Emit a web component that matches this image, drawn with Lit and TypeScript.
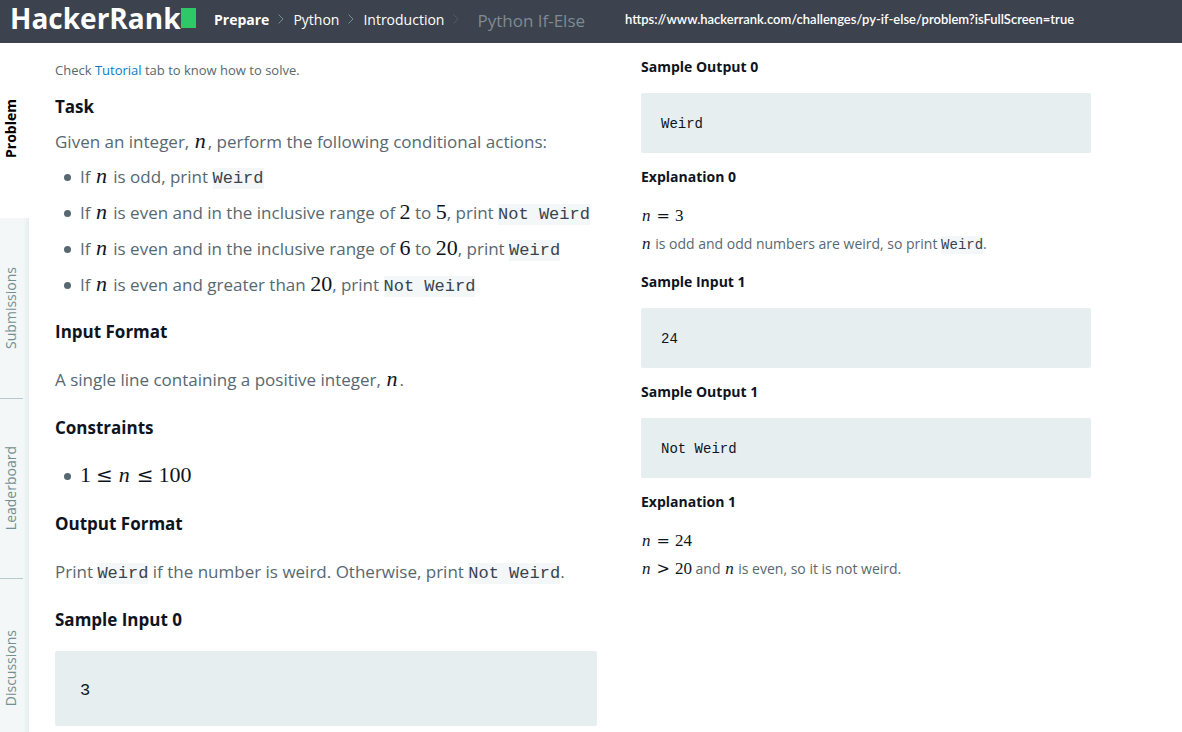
import { LitElement, html, css, svg } from "lit";
import { customElement } from "lit/decorators.js";

const chevron = (cls = "") => html`<svg class="chevron ${cls}" viewBox="0 0 8 12" width="8" height="12" aria-hidden="true">
  ${svg`<path d="M1.5 1.5 L6 6 L1.5 10.5" fill="none" stroke="currentColor" stroke-width="1"></path>`}
</svg>`;

const n = html`<var>n</var>`;
const num = (v: number) => html`<span class="num">${v}</span>`;
const rel = (s: string) => html`<span class="rel">${s}</span>`;

@customElement("app-root")
export class AppRoot extends LitElement {
  static styles = css`
    :host {
      display: flex;
      flex-direction: column;
      height: 100vh;
      overflow: hidden;
      background: #fff;
      color: #576871;
      font-family: "Open Sans", sans-serif;
    }
    * { box-sizing: border-box; }
    a { color: inherit; text-decoration: none; }
    header {
      display: flex;
      align-items: center;
      flex: none;
      height: 43px;
      padding: 0 10px 5px;
      background: #3c424e;
      color: #fff;
      font-size: 14px;
      white-space: nowrap;
    }
    .logo {
      display: flex;
      align-items: center;
      width: 204px;
      padding-bottom: 3px;
      font-size: 28px;
      line-height: 36px;
      font-weight: 700;
    }
    .logo-mark { width: 15px; height: 20px; background: #2ec866; }
    .crumbs { display: flex; align-items: center; width: 411px; }
    .crumbs b { font-weight: 700; }
    .chevron { margin: 0 8px; color: #6f8f93; flex: none; }
    .chevron.faint { color: #505b66; margin-right: 17px; }
    .current { font-size: 17px; line-height: 24px; color: #7f8b92; padding-top: 3px; }
    .url { font-family: Lato, sans-serif; font-size: 13px; font-weight: 600; }
    .body { display: flex; flex: 1; min-height: 0; }
    nav.rail { display: flex; flex-direction: column; flex: none; width: 29px; }
    .tab {
      position: relative;
      display: flex;
      align-items: center;
      flex: none;
      height: 180px;
      padding-left: 1px;
      background: linear-gradient(to right, #f3f7f7 23px, #e7eeef);
      color: #738f93;
      font-size: 14px;
    }
    .tab span { writing-mode: vertical-rl; transform: rotate(180deg); line-height: 20px; }
    .tab.active { height: 175px; padding-bottom: 4px; background: #fff; color: #000; font-weight: 700; }
    .tab + .tab:not(.first)::before {
      content: "";
      position: absolute;
      inset: 0 6px auto 0;
      border-top: 1px solid #b7c9cc;
    }
    main {
      display: grid;
      grid-template-columns: minmax(0, 53fr) minmax(0, 44fr);
      gap: 44px;
      flex: 1;
      padding: 0 91px 0 26px;
      align-items: start;
    }
    h2, p, ul, pre { margin: 0; }
    h2 { color: #0e141e; font-weight: 700; }
    .left { padding-top: 9px; font-size: 17px; line-height: 48px; white-space: nowrap; }
    .left h2 { font-size: 17px; }
    .left .note { font-size: 13px; line-height: 37px; }
    .note a { color: #097bbf; }
    .tight { line-height: 35px; margin-bottom: 5px; }
    .tight ul { line-height: 36px; }
    ul { list-style: none; padding: 0; }
    li { display: flex; align-items: center; padding-left: 9px; }
    li::before {
      content: "";
      flex: none;
      width: 7px;
      height: 7px;
      margin-right: 9px;
      border-radius: 50%;
      background: #576871;
    }
    var, .num {
      font-family: "Liberation Serif", serif;
      font-size: 22px;
      line-height: 1;
      color: #0e141e;
    }
    var { padding: 0 2px 0 1px; }
    .rel { padding: 0 5px; font-family: "DejaVu Serif", serif; font-size: 20px; line-height: 1; color: #0e141e; }
    code, pre { font-family: "Liberation Mono", monospace; }
    code { font-size: 17px; color: #39424e; background: #f3f7f7; line-height: 20px; padding: 1px 0; }
    pre { background: #e7eeef; color: #0e141e; border-radius: 2px; }
    .left pre { margin-top: 7px; padding: 30px 25px 25px; font-size: 17px; line-height: 20px; }
    .right { font-size: 14px; line-height: 28px; }
    .right h2 { font-size: 14px; line-height: 48px; padding-bottom: 1px; }
    .right pre { margin-top: 1px; padding: 21px 20px 19px; font-size: 14px; line-height: 20px; }
    .right code { font-size: 14px; }
    .right var, .right .num { font-size: 17px; }
    .right var { padding: 0 1px; }
    .right .rel { font-size: 16px; }
  `;

  render() {
    return html`
      <header>
        <a class="logo" href="#">HackerRank<i class="logo-mark"></i></a>
        <nav class="crumbs" aria-label="Breadcrumb">
          <a href="#"><b>Prepare</b></a>${chevron()}<a href="#">Python</a>${chevron()}<a href="#">Introduction</a>${chevron("faint")}<span class="current">Python If-Else</span>
        </nav>
        <span class="url">https://www.hackerrank.com/challenges/py-if-else/problem?isFullScreen=true</span>
      </header>
      <div class="body">
        <nav class="rail" aria-label="Challenge sections">
          <a class="tab active" href="#"><span>Problem</span></a>
          <a class="tab first" href="#"><span>Submissions</span></a>
          <a class="tab" href="#"><span>Leaderboard</span></a>
          <a class="tab" href="#"><span>Discussions</span></a>
        </nav>
        <main>
          <section class="left">
            <p class="note">Check <a href="#">Tutorial</a> tab to know how to solve.</p>
            <div class="tight">
              <h2>Task</h2>
              <p>Given an integer, ${n}, perform the following conditional actions:</p>
              <ul>
                <li><span>If ${n} is odd, print <code>Weird</code></span></li>
                <li><span>If ${n} is even and in the inclusive range of ${num(2)} to ${num(5)}, print <code>Not Weird</code></span></li>
                <li><span>If ${n} is even and in the inclusive range of ${num(6)} to ${num(20)}, print <code>Weird</code></span></li>
                <li><span>If ${n} is even and greater than ${num(20)}, print <code>Not Weird</code></span></li>
              </ul>
            </div>
            <h2>Input Format</h2>
            <p>A single line containing a positive integer, ${n}.</p>
            <h2>Constraints</h2>
            <ul>
              <li><span>${num(1)}${rel("≤")}${n}${rel("≤")}${num(100)}</span></li>
            </ul>
            <h2>Output Format</h2>
            <p>Print <code>Weird</code> if the number is weird. Otherwise, print <code>Not Weird</code>.</p>
            <h2>Sample Input 0</h2>
            <pre>3</pre>
          </section>
          <section class="right">
            <h2>Sample Output 0</h2>
            <pre>Weird</pre>
            <h2>Explanation 0</h2>
            <p>${n}${rel("=")}${num(3)}</p>
            <p>${n} is odd and odd numbers are weird, so print <code>Weird</code>.</p>
            <h2>Sample Input 1</h2>
            <pre>24</pre>
            <h2>Sample Output 1</h2>
            <pre>Not Weird</pre>
            <h2>Explanation 1</h2>
            <p>${n}${rel("=")}${num(24)}</p>
            <p>${n}${rel(">")}${num(20)} and ${n} is even, so it is not weird.</p>
          </section>
        </main>
      </div>
    `;
  }
}
